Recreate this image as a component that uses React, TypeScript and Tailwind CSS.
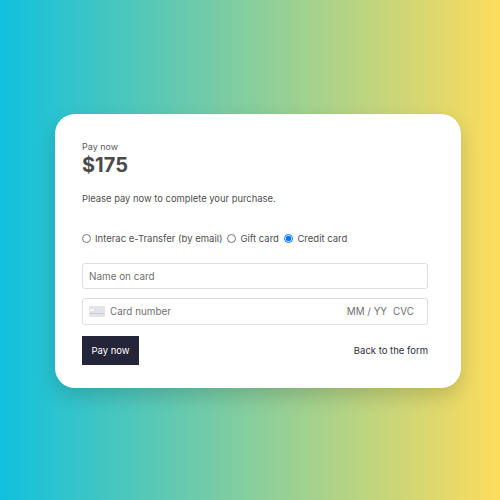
export default function App() {
  return (
    <div className="w-[500px] h-[500px] pl-[55px] pt-[114px] bg-linear-to-r/srgb from-[#10c0de] to-[#fddc5c] font-['Inter',sans-serif]">
      <div className="w-[406px] h-[274px] bg-white rounded-[20px] pl-[27px] pr-[33px] pt-[26px] shadow-[0_8px_20px_rgba(0,0,0,0.16)] flex flex-col">
        <p className="text-[9px] leading-[13px] text-[#5c5c5c]">Pay now</p>
        <p className="text-[20px] leading-[25px] font-bold text-[#4a4a4a]">$175</p>
        <p className="mt-[14px] text-[9.4px] leading-[14px] text-[#4f4f4f]">Please pay now to complete your purchase.</p>

        <div className="mt-[26px] flex items-center text-[9.5px] leading-[14px] text-[#4f4f4f]">
          <input type="radio" name="pay" className="w-[9px] h-[9px] m-0 -translate-y-px" />
          <span className="ml-[4px]">Interac e-Transfer (by email)</span>
          <input type="radio" name="pay" className="ml-[5px] w-[9px] h-[9px] m-0 -translate-y-px" />
          <span className="ml-[4px]">Gift card</span>
          <input type="radio" name="pay" defaultChecked className="ml-[5.5px] w-[9px] h-[9px] m-0 -translate-y-px" />
          <span className="ml-[4px]">Credit card</span>
        </div>

        <div className="mt-[17px] h-[26px] border border-[#dfdfdf] rounded-[3px] flex items-center px-[6px] text-[9.9px] text-[#6f6f6f]">
          Name on card
        </div>

        <div className="mt-[9px] h-[27px] border border-[#dfdfdf] rounded-[3px] flex items-center pl-[6px] pr-[13px] text-[9.9px] text-[#6f6f6f]">
          <svg width="16" height="11" viewBox="0 0 16 11" className="mr-[5px]">
            <rect width="16" height="11" rx="1" fill="#e3e4ea" />
            <rect x="1" y="3" width="4" height="2" fill="#f7f7fa" />
            <rect x="1" y="7" width="14" height="1" fill="#c9cad3" />
          </svg>
          <span>Card number</span>
          <span className="ml-auto">MM / YY</span>
          <span className="ml-[6px]">CVC</span>
        </div>

        <div className="mt-[11px] flex items-center justify-between">
          <button className="w-[57px] h-[29px] pt-[2px] bg-[#25253a] text-white text-[9.5px]">Pay now</button>
          <a className="pt-[2px] text-[9.5px] text-[#2f2f3f]">Back to the form</a>
        </div>
      </div>
    </div>
  )
}
